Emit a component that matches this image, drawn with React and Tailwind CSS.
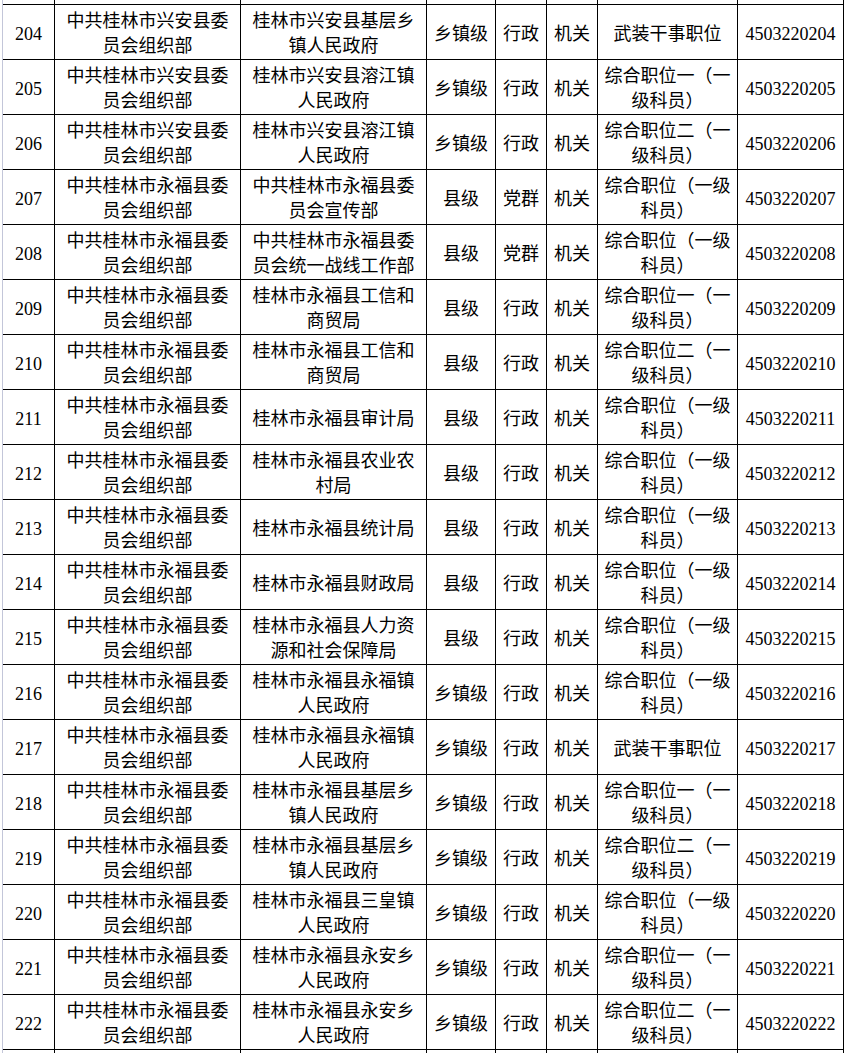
const org1 = '中共桂林市兴安县委员会组织部'
const org2 = '中共桂林市永福县委员会组织部'

const rows = [
  ['204', org1, '桂林市兴安县基层乡镇人民政府', '乡镇级', '行政', '机关', '武装干事职位', '4503220204'],
  ['205', org1, '桂林市兴安县溶江镇人民政府', '乡镇级', '行政', '机关', '综合职位一（一级科员）', '4503220205'],
  ['206', org1, '桂林市兴安县溶江镇人民政府', '乡镇级', '行政', '机关', '综合职位二（一级科员）', '4503220206'],
  ['207', org2, '中共桂林市永福县委员会宣传部', '县级', '党群', '机关', '综合职位（一级科员）', '4503220207'],
  ['208', org2, '中共桂林市永福县委员会统一战线工作部', '县级', '党群', '机关', '综合职位（一级科员）', '4503220208'],
  ['209', org2, '桂林市永福县工信和商贸局', '县级', '行政', '机关', '综合职位一（一级科员）', '4503220209'],
  ['210', org2, '桂林市永福县工信和商贸局', '县级', '行政', '机关', '综合职位二（一级科员）', '4503220210'],
  ['211', org2, '桂林市永福县审计局', '县级', '行政', '机关', '综合职位（一级科员）', '4503220211'],
  ['212', org2, '桂林市永福县农业农村局', '县级', '行政', '机关', '综合职位（一级科员）', '4503220212'],
  ['213', org2, '桂林市永福县统计局', '县级', '行政', '机关', '综合职位（一级科员）', '4503220213'],
  ['214', org2, '桂林市永福县财政局', '县级', '行政', '机关', '综合职位（一级科员）', '4503220214'],
  ['215', org2, '桂林市永福县人力资源和社会保障局', '县级', '行政', '机关', '综合职位（一级科员）', '4503220215'],
  ['216', org2, '桂林市永福县永福镇人民政府', '乡镇级', '行政', '机关', '综合职位（一级科员）', '4503220216'],
  ['217', org2, '桂林市永福县永福镇人民政府', '乡镇级', '行政', '机关', '武装干事职位', '4503220217'],
  ['218', org2, '桂林市永福县基层乡镇人民政府', '乡镇级', '行政', '机关', '综合职位一（一级科员）', '4503220218'],
  ['219', org2, '桂林市永福县基层乡镇人民政府', '乡镇级', '行政', '机关', '综合职位二（一级科员）', '4503220219'],
  ['220', org2, '桂林市永福县三皇镇人民政府', '乡镇级', '行政', '机关', '综合职位（一级科员）', '4503220220'],
  ['221', org2, '桂林市永福县永安乡人民政府', '乡镇级', '行政', '机关', '综合职位一（一级科员）', '4503220221'],
  ['222', org2, '桂林市永福县永安乡人民政府', '乡镇级', '行政', '机关', '综合职位二（一级科员）', '4503220222'],
]

// characters per line before the cell wraps
const wrapAt = [0, 9, 9, 0, 0, 0, 7, 0]

function chunk(text, n) {
  if (!n) return [text]
  const chars = Array.from(text)
  const out = []
  for (let i = 0; i < chars.length; i += n) out.push(chars.slice(i, i + n).join(''))
  return out
}

const cols = 'grid grid-cols-[52px_186px_186px_69px_51px_51px_140px_106px]'
const cell = 'border-r border-b border-black flex flex-col items-center justify-center text-center'

function EmptyRow({ h }) {
  return (
    <div className={cols}>
      {wrapAt.map((_, i) => (
        <div key={i} className={`${cell} ${h}`} />
      ))}
    </div>
  )
}

export default function App() {
  return (
    <div
      className="h-[1053px] w-[847px] overflow-hidden bg-white text-black text-[18px] leading-[25px]"
      style={{ fontFamily: "'Liberation Serif', 'Noto Sans CJK SC', serif" }}
    >
      <div className="ml-[2px] border-l border-[#c3c6d9] w-[842px]">
        <EmptyRow h="h-[5px]" />
        {rows.map((r) => (
          <div key={r[0]} className={cols}>
            {r.map((v, i) => (
              <div key={i} className={`${cell} h-[55px] pt-[4px]`}>
                {chunk(v, wrapAt[i]).map((line, j) => (
                  <span key={j} className="whitespace-nowrap">{line}</span>
                ))}
              </div>
            ))}
          </div>
        ))}
        <EmptyRow h="h-[30px]" />
      </div>
    </div>
  )
}
